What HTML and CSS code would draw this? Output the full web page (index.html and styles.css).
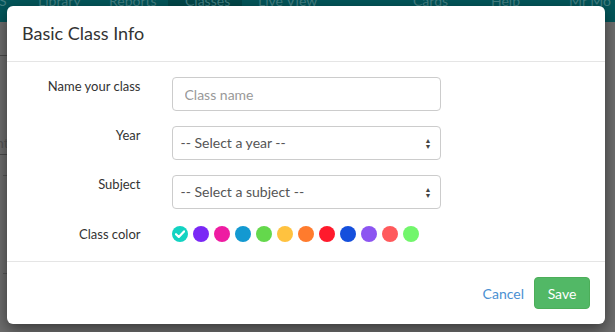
FILE: index.html
```html
<!doctype html>
<html>
<head>
<link rel="stylesheet" href="styles.css">
<title>Basic Class Info</title>
</head>
<body>
<div class="nav">
	<ul class="nav-items">
		<li class="first">S</li>
		<li class="library">Library</li>
		<li class="reports">Reports</li>
		<li class="active">Classes</li>
		<li class="live">Live View</li>
		<li class="cards">Cards</li>
		<li class="help">Help</li>
		<li class="user">Mr Mo</li>
	</ul>
</div>
<div class="page">
	<div class="page-rule rule-a"></div>
	<div class="page-text">nt</div>
	<div class="page-rule rule-b"></div>
	<div class="page-dash dash-a"></div>
	<div class="page-dash dash-b"></div>
</div>

<div class="modal">
	<div class="modal-header">
		<h4 class="modal-title">Basic Class Info</h4>
	</div>
	<div class="modal-body">
		<div class="form-row">
			<label class="control-label">Name your class</label>
			<input class="form-control" placeholder="Class name">
		</div>
		<div class="form-row">
			<label class="control-label">Year</label>
			<div class="form-control select">-- Select a year --<span class="arrows">&#9650;<br>&#9660;</span></div>
		</div>
		<div class="form-row">
			<label class="control-label">Subject</label>
			<div class="form-control select">-- Select a subject --<span class="arrows">&#9650;<br>&#9660;</span></div>
		</div>
		<div class="form-row color-row">
			<label class="control-label">Class color</label>
			<div class="swatches">
				<span class="swatch selected" style="background:#13d3c2">
					<svg width="10" height="8" viewBox="0 0 10 8"><path d="M1 4.2 L3.8 7 L9 1.4" fill="none" stroke="#fff" stroke-width="2.2" stroke-linecap="round" stroke-linejoin="round"/></svg>
				</span>
				<span class="swatch" style="background:#7a28f5"></span>
				<span class="swatch" style="background:#ee1ca2"></span>
				<span class="swatch" style="background:#1399d1"></span>
				<span class="swatch" style="background:#64d84c"></span>
				<span class="swatch" style="background:#ffc23f"></span>
				<span class="swatch" style="background:#ff7b2d"></span>
				<span class="swatch" style="background:#ff1a2c"></span>
				<span class="swatch" style="background:#154fdc"></span>
				<span class="swatch" style="background:#8c55f1"></span>
				<span class="swatch" style="background:#ff5a5c"></span>
				<span class="swatch" style="background:#72f66c"></span>
			</div>
		</div>
	</div>
	<div class="modal-footer">
		<a class="btn-link">Cancel</a>
		<button class="btn-save">Save</button>
	</div>
</div>
</body>
</html>
```
FILE: styles.css
```css
body {
	margin: 0;
	height: 332px;
	overflow: hidden;
	background-color: #6e6e6e;
	font-family: Lato, "Open Sans", sans-serif;
	color: #333;
	position: relative;
}

.nav {
	height: 22px;
	background-color: #03565a;
	overflow: hidden;
}
.nav-items {
	list-style: none;
	margin: -10px 0 0 0;
	padding: 0;
	display: flex;
	white-space: nowrap;
	font-size: 14px;
	color: #427f82;
}
.nav-items li {
	box-sizing: border-box;
	line-height: 22px;
	height: 32px;
	flex: none;
}
.nav-items li.first   { margin-left: -1px; width: 39px; }
.nav-items li.library { width: 71px; }
.nav-items li.reports { width: 59px; }
.nav-items li.active {
	background-color: #024749;
	padding-left: 17px;
	width: 74px;
}
.nav-items li.live    { margin-left: 16px; width: 155px; }
.nav-items li.cards   { width: 78px; }
.nav-items li.help    { width: 78px; }

.page {
	position: relative;
}
.page-rule {
	position: absolute;
	left: 0;
	width: 10px;
	height: 1px;
	background: #4a4a4a;
}
.rule-a { top: 33px; }
.rule-b { top: 132px; }
.page-text {
	position: absolute;
	left: -4px;
	top: 112px;
	font-size: 14px;
	color: #555;
}
.page-dash {
	position: absolute;
	left: 3px;
	width: 5px;
	height: 1px;
	background: #555;
}
.dash-a { top: 153px; }
.dash-b { top: 251px; }

/* the dialog */
.modal {
	position: absolute;
	left: 7px;
	top: 6px;
	width: 598px;
	height: 318px;
	background: #fff;
	border-radius: 6px;
	box-shadow: 0 5px 15px rgba(0,0,0,.5);
	display: flex;
	flex-direction: column;
}
.modal-header {
	padding: 15px;
	border-bottom: 1px solid #e5e5e5;
}
.modal-title {
	margin: 0;
	font-size: 18px;
	font-weight: normal;
	line-height: 25px;
	color: #333;
}
.modal-body {
	padding: 15px 0;
	display: flex;
	flex-direction: column;
	gap: 15px;
}
.form-row {
	display: grid;
	grid-template-columns: 149.5px 299px;
	align-items: start;
}
.control-label {
	padding: 0 16px 0 15px;
	text-align: right;
	font-size: 13px;
	line-height: 18px;
	color: #333;
}
.form-control {
	box-sizing: border-box;
	margin: 0 15px;
	height: 34px;
	border: 1px solid #ccc;
	border-radius: 4px;
	padding: 0 12px;
	font-family: inherit;
	font-size: 14px;
	color: #555;
	outline: none;
}
.form-control::placeholder {
	color: #999;
}
.select {
	padding: 0 8px;
	display: flex;
	align-items: center;
	justify-content: space-between;
	line-height: 32px;
}
.arrows {
	font-size: 7px;
	line-height: 6px;
	color: #444;
	text-align: center;
}
.color-row {
	height: 22px;
}
.color-row .control-label {
	line-height: 20px;
}
.swatches {
	margin: 2px 15px 0;
	display: flex;
	gap: 5px;
}
.swatch {
	width: 16px;
	height: 16px;
	border-radius: 50%;
	display: flex;
	align-items: center;
	justify-content: center;
}

.modal-footer {
	margin-top: auto;
	border-top: 1px solid #e5e5e5;
	padding: 15px;
	display: flex;
	justify-content: flex-end;
	align-items: center;
	gap: 10px;
}
.btn-link {
	color: #4a90d2;
	font-size: 14px;
}
.btn-save {
	width: 56px;
	height: 32px;
	border: 1px solid #4cae59;
	border-radius: 4px;
	background: #52b866;
	color: #fff;
	font-family: inherit;
	font-size: 14px;
}
```
